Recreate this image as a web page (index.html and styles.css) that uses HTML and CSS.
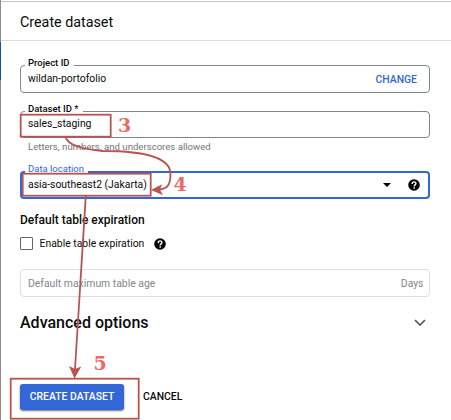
FILE: index.html
```html
<!DOCTYPE html>
<html lang="en">
<head>
<meta charset="utf-8">
<title>Create dataset</title>
<link rel="stylesheet" href="styles.css">
</head>
<body>
<main class="panel">
  <header class="header"><h1 class="title">Create dataset</h1></header>
  <form class="form">
    <div class="field project">
      <label class="label">Project ID</label>
      <span class="value">wildan-portofolio</span>
      <span class="change">CHANGE</span>
    </div>
    <div class="field dataset">
      <label class="label">Dataset ID *</label>
      <span class="value">sales_staging</span>
    </div>
    <p class="hint">Letters, numbers, and underscores allowed</p>
    <div class="field location">
      <label class="label">Data location</label>
      <span class="value">asia-southeast2 (Jakarta)</span>
      <svg class="caret" viewBox="0 0 8 4"><path d="M0 0h8L4 4z"/></svg>
      <svg class="help" viewBox="0 0 12 12"><circle cx="6" cy="6" r="5.800"/><path d="M4.200 4.900C4.200 2.300 7.900 2.300 7.900 4.600C7.900 5.900 6.200 5.900 6.200 7.400M6.200 8.300v1.400"/></svg>
    </div>
    <h2 class="subheading">Default table expiration</h2>
    <div class="check-row">
      <span class="checkbox"></span>
      <span class="check-label">Enable table expiration</span>
      <svg class="help" viewBox="0 0 12 12"><circle cx="6" cy="6" r="5.800"/><path d="M4.200 4.900C4.200 2.300 7.900 2.300 7.900 4.600C7.900 5.900 6.200 5.900 6.200 7.400M6.200 8.300v1.400"/></svg>
    </div>
    <div class="field age">
      <span class="value">Default maximum table age</span>
      <span class="unit">Days</span>
    </div>
    <div class="advanced">
      <h2 class="advanced-title">Advanced options</h2>
      <svg class="chevron" viewBox="0 0 12 7"><path d="M1 1l5 5 5-5"/></svg>
    </div>
    <div class="actions">
      <button type="button" class="create">CREATE DATASET</button>
      <button type="button" class="cancel">CANCEL</button>
    </div>
  </form>
</main>
<div class="backdrop-accent"></div>
<svg class="notes" viewBox="0 0 451 420">
  <g class="note-lines">
    <rect x="20.700" y="114.700" width="90" height="22"/>
    <rect x="22.700" y="173.700" width="128" height="22"/>
    <rect x="10.700" y="378.700" width="128" height="40"/>
    <path d="M65.500 137C68 145 80 149 103 151C145 151 170.500 158 170.500 174C170.500 184 168 189 159 189.700"/>
    <path d="M85.800 196L75 369"/>
  </g>
  <path class="note-head" d="M151 190L162 184.300L160 189.700L163 195.300z"/>
  <path class="note-head" d="M74.500 378.500L69 366L75 369L81.300 366.500z"/>
  <g class="note-numbers">
    <text x="118" y="132">3</text>
    <text x="173.500" y="191">4</text>
    <text x="93.500" y="370">5</text>
  </g>
</svg>
</body>
</html>
```
FILE: styles.css
```css
* { box-sizing: border-box; }
body {
  margin: 0;
  width: 451px;
  height: 420px;
  overflow: hidden;
  background: #fff;
  color: #0a0a0a;
  font-family: Roboto, sans-serif;
  font-size: 10.400px;
}
h1, h2, p { margin: 0; }
.panel {
  height: 420px;
  border-left: 1px solid #8c8c8c;
  padding-top: 1px;
}
.header {
  height: 40px;
  border-top: 1px solid #c4c4c4;
  border-bottom: 1px solid #dedede;
  padding: 2px 0 0 19px;
  display: flex;
  align-items: center;
}
.title { font-size: 14.300px; font-weight: 400; line-height: 18px; }
.form { padding: 24px 21px 0 19px; }
.field {
  position: relative;
  height: 28px;
  border: 1px solid #80868b;
  border-radius: 4px;
  padding: 0 12px 0 7px;
  display: flex;
  align-items: center;
}
.value { flex: 1; line-height: 14px; }
.dataset .value { padding-bottom: 1px; }
.label {
  position: absolute;
  left: 4px;
  top: -9px;
  padding: 0 4px 0 3px;
  background: #fff;
  font-size: 9.500px;
  font-weight: 500;
  line-height: 12px;
}
.change { color: #3367d6; font-weight: 500; font-size: 10.400px; }
.dataset { height: 27px; margin-top: 18px; }
.hint { height: 33px; padding: 3px 0 0 8px; font-size: 9.600px; line-height: 12px; color: #757575; }
.location { border: 2px solid #3367d6; padding: 0 8px 0 6px; }
.location .label { left: 3px; top: -10px; color: #3367d6; font-weight: 400; }
.caret { width: 8px; height: 4px; margin-right: 17px; }
.help { width: 12px; height: 12px; }
.help path { fill: none; stroke: #fff; stroke-width: 1.400; }
.subheading { margin-top: 13px; font-size: 12px; font-weight: 500; line-height: 17px; }
.check-row { display: flex; align-items: center; height: 15px; margin-top: 7px; }
.checkbox { width: 13px; height: 13px; border: 1px solid #666; border-radius: 1px; margin-right: 6.500px; }
.check-label { margin-right: 10px; }
.age { margin-top: 18px; border-color: #dedede; color: #80868b; padding-right: 5.500px; }
.age .value { padding-top: 1px; }
.advanced { display: flex; align-items: center; justify-content: space-between; height: 20px; margin-top: 15px; padding-right: 4px; }
.advanced-title { font-size: 16px; font-weight: 500; }
.chevron { width: 12px; height: 7px; fill: none; stroke: #555; stroke-width: 1.700; }
.actions { display: flex; margin-top: 52px; }
button { border: 0; padding: 0; background: none; font: 500 10.400px/26px Roboto, sans-serif; color: #0a0a0a; }
.create { width: 104px; height: 26px; border-radius: 3px; background: #3367d6; color: #fff; box-shadow: 0 1px 2px #777; }
.cancel { margin-left: 19px; }
.backdrop-accent { position: absolute; left: 0; top: 42px; width: 1px; height: 38px; background: #174ea6; }
.notes { position: absolute; inset: 0; width: 451px; height: 420px; }
.note-lines { fill: none; stroke: #b85450; stroke-width: 1.800; }
.note-head { fill: #b85450; }
.note-numbers { fill: #ea6b66; font: bold 19px "DejaVu Serif", serif; }
```
